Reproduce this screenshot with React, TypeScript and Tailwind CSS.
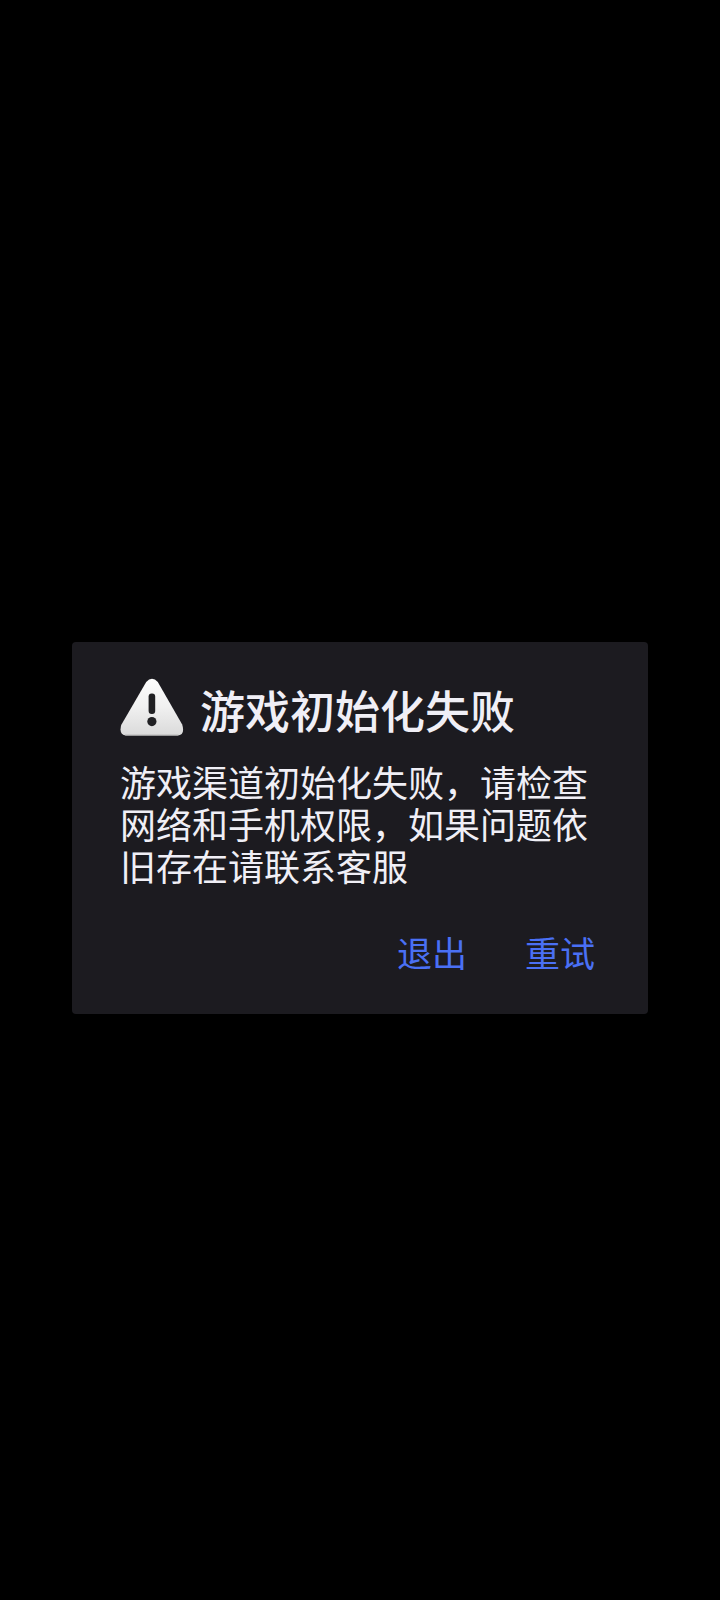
import { useState } from "react";

const TITLE = "游戏初始化失败";
const MESSAGE = "游戏渠道初始化失败，请检查网络和手机权限，如果问题依旧存在请联系客服";

function WarningIcon() {
  return (
    <svg className="h-16 w-16 flex-shrink-0" viewBox="0 0 64 64" aria-hidden="true">
      <defs>
        <linearGradient id="warning-fill" x1="0" y1="0" x2="0" y2="1">
          <stop offset="0" stopColor="#fdfdfd" />
          <stop offset="0.5" stopColor="#f0f0f0" />
          <stop offset="1" stopColor="#dadada" />
        </linearGradient>
      </defs>
      <path
        d="M26.2 8 Q32 1.6 37.8 8 L62.2 50.5 Q65.4 61 57.5 61.6 H6 Q-1.4 61 1.2 51 Z"
        fill="url(#warning-fill)"
      />
      <path d="M5.5 61 H58" stroke="#b8b8b8" strokeWidth="1" strokeLinecap="round" />
      <rect x="28.6" y="19.5" width="6.6" height="20.5" rx="3" fill="#202023" />
      <circle cx="31.9" cy="47.6" r="4.6" fill="#202023" />
    </svg>
  );
}

function DialogButton({ label, onClick }: { label: string; onClick: () => void }) {
  return (
    <button
      type="button"
      onClick={onClick}
      className="h-24 cursor-pointer px-[29px] text-[35px] leading-[42px] text-[#4a70f4]"
    >
      {label}
    </button>
  );
}

export default function App() {
  const [open, setOpen] = useState(true);

  return (
    <div className="flex min-h-screen items-center justify-center bg-black pt-14 font-['Noto_Sans_CJK_SC',sans-serif]">
      {open && (
        <div
          role="alertdialog"
          aria-labelledby="dialog-title"
          aria-describedby="dialog-message"
          className="w-4/5 rounded bg-[#1c1b20] pt-8 pb-3.5 text-[#f0eff6]"
        >
          <div className="flex items-start gap-4 px-12">
            <WarningIcon />
            <h1 id="dialog-title" className="text-[45px] leading-[72px] font-medium">
              {TITLE}
            </h1>
          </div>

          <p id="dialog-message" className="mt-3.5 px-12 text-4xl leading-[42px]">
            {MESSAGE}
          </p>

          {/* Actions */}
          <div className="mt-4.5 flex justify-end px-6">
            <DialogButton label="退出" onClick={() => setOpen(false)} />
            <DialogButton label="重试" onClick={() => window.location.reload()} />
          </div>
        </div>
      )}
    </div>
  );
}
